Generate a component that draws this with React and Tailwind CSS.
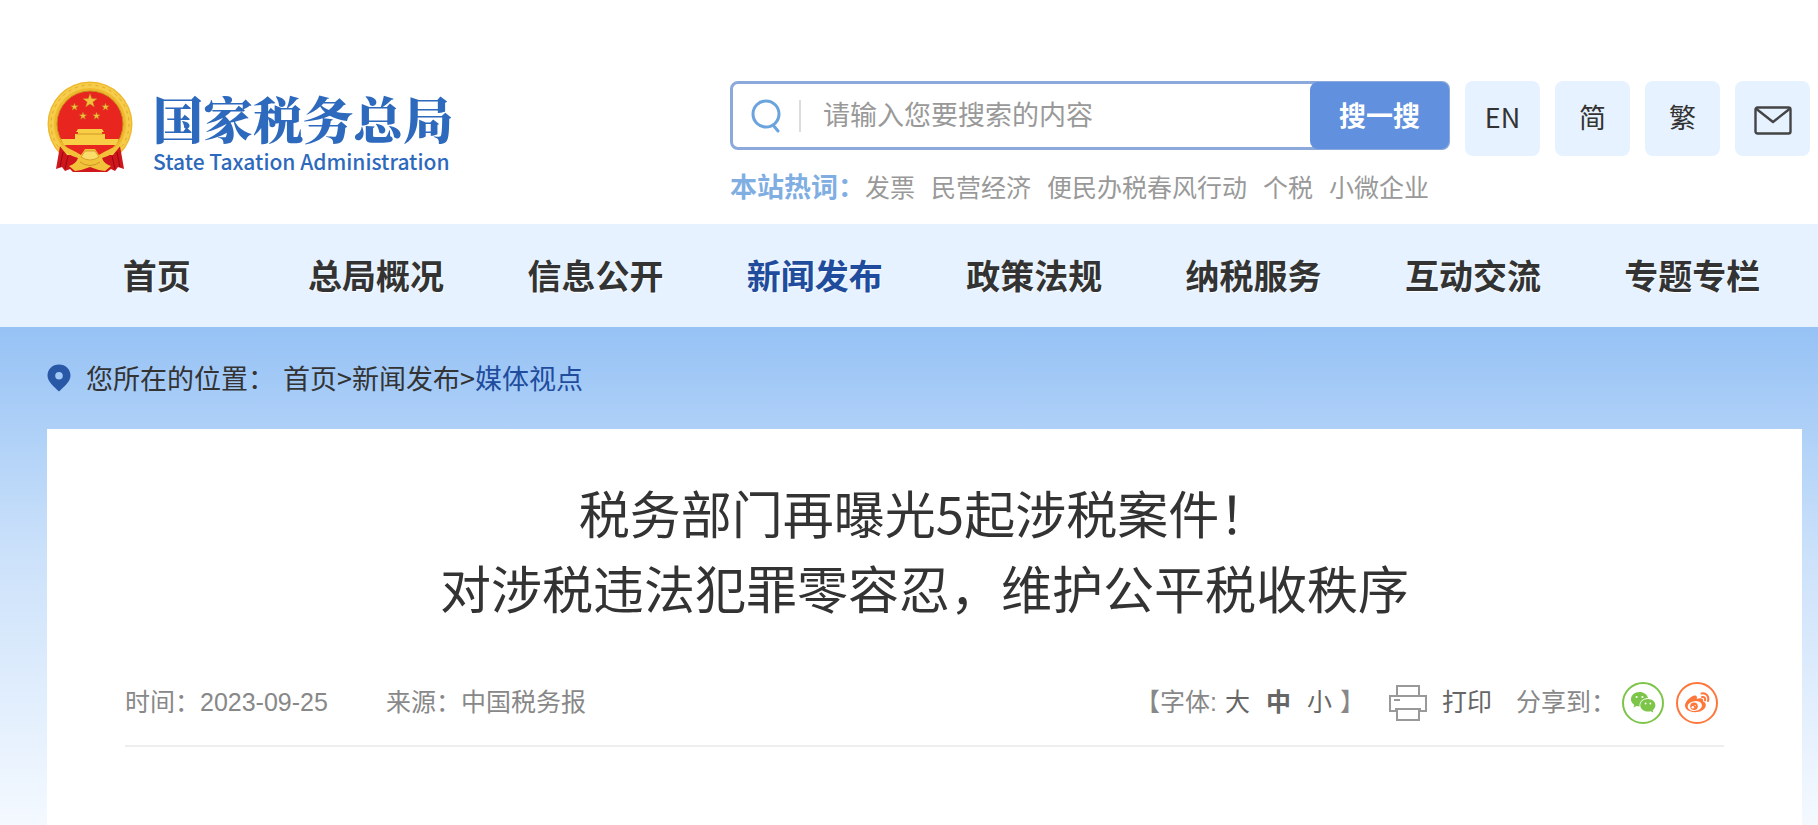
import React from "react";

const NAV = ["首页", "总局概况", "信息公开", "新闻发布", "政策法规", "纳税服务", "互动交流", "专题专栏"];
const HOT = ["发票", "民营经济", "便民办税春风行动", "个税", "小微企业"];

function Star({ cx, cy, r }) {
  const pts = Array.from({ length: 10 }, (_, i) => {
    const a = (Math.PI / 5) * i - Math.PI / 2;
    const d = i % 2 ? r * 0.4 : r;
    return `${cx + d * Math.cos(a)},${cy + d * Math.sin(a)}`;
  }).join(" ");
  return <polygon points={pts} fill="#f3c13c" stroke="#b8761c" strokeWidth="0.4" />;
}

function Emblem() {
  return (
    <svg viewBox="0 0 86 91" className="h-[91px] w-[86px] shrink-0" aria-hidden="true">
      <circle cx="43" cy="43" r="42.5" fill="#efb92f" />
      <circle cx="43" cy="43" r="38.5" fill="none" stroke="#f6cd4b" strokeWidth="5" />
      <circle cx="43" cy="43" r="39" fill="none" stroke="#e3a728" strokeWidth="1" strokeDasharray="3 4" />
      <circle cx="43" cy="43" r="33" fill="#e8251f" stroke="#c98a1e" strokeWidth="1" />
      <Star cx={43} cy={20} r={7.5} />
      <Star cx={27.5} cy={26} r={4} />
      <Star cx={58.5} cy={26} r={4} />
      <Star cx={36} cy={35} r={4} />
      <Star cx={49.5} cy={35} r={4} />
      <path d="M31 48 h24 l2 3 h-2 v2 h3 v5 H72 q-1 3 -3 6 H17 q-2 -3 -3 -6 H28 v-5 h3 v-2 h-2 Z" fill="#f7ce45" />
      <path d="M30 53h26" stroke="#c98a1e" strokeWidth="0.8" />
      <path d="M13 65 L9 88 L15 86 L18 90 L23 88 L26 91 L60 91 L64 88 L68 90 L71 86 L77 88 L73 65 L66 74 H20 Z" fill="#cf161d" />
      <path d="M16 71 l-3 15 M21 75 l-3 13 M70 71 l3 15 M65 75 l3 13" stroke="#97080f" strokeWidth="1" />
      <path d="M12 64 q11 3 22 10 l4 -6 h10 l4 6 q11 -7 22 -10 q-7 10 -19 13 q2 6 9 8 l-6 5 q-8 -1 -15 -4 q-7 3 -15 4 l-6 -5 q7 -2 9 -8 q-12 -3 -19 -13 Z" fill="#f2c23a" />
      <path d="M34 76 q9 6 18 0 l-4 -6 h-10 Z" fill="#f9dc6a" stroke="#cf9526" strokeWidth="0.8" />
      <path d="M33 81 q10 7 20 0" fill="none" stroke="#cf9526" strokeWidth="1" />
    </svg>
  );
}

function SearchIcon() {
  return (
    <svg viewBox="0 0 30 34" className="h-[34px] w-[30px] shrink-0" fill="none" stroke="#6aa3de" strokeWidth="3" strokeLinecap="round" aria-hidden="true">
      <circle cx="15" cy="15" r="13" />
      <path d="M22 26 L27 32" />
    </svg>
  );
}

function MailIcon() {
  return (
    <svg viewBox="0 0 38 29" className="mt-1 h-[29px] w-[38px]" fill="none" stroke="#444" strokeWidth="2.4" strokeLinejoin="round" aria-hidden="true">
      <rect x="1.5" y="1.5" width="35" height="26" rx="2" />
      <path d="M2.5 3 L19 16 L35.5 3" />
    </svg>
  );
}

function PinIcon() {
  return (
    <svg viewBox="0 0 24 28" className="h-7 w-6 shrink-0" aria-hidden="true">
      <path fillRule="evenodd" fill="#2858a6" d="M12 .5 C5.400 .5 .5 5.400 .5 11.500 C.5 18 7 22.500 12 27.500 C17 22.500 23.500 18 23.500 11.500 C23.500 5.400 18.600 .5 12 .5 Z M12 8 a3.800 3.800 0 1 1 0 7.600 a3.800 3.800 0 1 1 0 -7.600 Z" />
    </svg>
  );
}

function PrinterIcon() {
  return (
    <svg viewBox="0 0 38 36" className="h-9 w-[38px] shrink-0" fill="none" stroke="#999" strokeWidth="2" aria-hidden="true">
      <path d="M8 10 V1 H30 V10" />
      <path d="M8 26 H1 V11 H37 V26 H30" />
      <path d="M6 24 H32 M8 24 V35 H30 V24" />
      <path d="M5 15 H11" />
    </svg>
  );
}

function WechatIcon() {
  return (
    <svg viewBox="0 0 42 42" className="h-[42px] w-[42px]" aria-hidden="true">
      <circle cx="21" cy="21" r="20" fill="#fff" stroke="#7cc549" strokeWidth="2" />
      <path fill="#7cc549" d="M17.500 10 C12.500 10 9 13.200 9 17.300 C9 19.700 10.300 21.700 12.300 23 L11.500 25.600 L14.500 24.100 C15.500 24.400 16.500 24.600 17.500 24.600 C17 19.500 21 16 26 16 C25.200 12.400 21.800 10 17.500 10 Z" />
      <path fill="#7cc549" d="M26 17 C21.600 17 18.300 19.800 18.300 23.300 C18.300 26.800 21.600 29.600 26 29.600 C27 29.600 27.800 29.500 28.600 29.200 L31.300 30.600 L30.600 28.200 C32.300 27 33.400 25.300 33.400 23.300 C33.400 19.800 30.200 17 26 17 Z" />
      <g fill="#fff">
        <circle cx="14.600" cy="15" r="1.100" />
        <circle cx="20.400" cy="15" r="1.100" />
        <circle cx="23.600" cy="21.500" r="0.900" />
        <circle cx="28.400" cy="21.500" r="0.900" />
      </g>
    </svg>
  );
}

function WeiboIcon() {
  return (
    <svg viewBox="0 0 42 42" className="h-[42px] w-[42px]" aria-hidden="true">
      <circle cx="21" cy="21" r="20" fill="#fff" stroke="#ff763b" strokeWidth="2" />
      <path fill="#ff763b" d="M18.500 13.500 C20.500 13 21.500 14.500 20.800 17 C24.500 15.500 28 16.300 27 19.600 C29 20.200 30 21.500 29.800 23.500 C29.300 27.500 24.500 30.200 19 30.200 C13 30.200 9 27.500 9 23.600 C9 19.800 14 14.500 18.500 13.500 Z" />
      <ellipse cx="18.800" cy="24" rx="7.200" ry="4.900" fill="#fff" transform="rotate(-8 18.800 24)" />
      <circle cx="18" cy="24.200" r="3.800" fill="#ff763b" />
      <circle cx="16.800" cy="25.200" r="1.300" fill="#fff" />
      <circle cx="19.200" cy="23.600" r="0.600" fill="#fff" />
      <path d="M25.500 11.500 C30 10.500 33.500 14.500 32 19 M26 15 C28.300 14.500 29.700 16.300 29 18.400" fill="none" stroke="#ff763b" strokeWidth="2" strokeLinecap="round" />
    </svg>
  );
}

export default function App() {
  return (
    <div className="flex min-h-screen flex-col bg-white font-['Noto_Sans_CJK_SC',sans-serif] text-[#333]">
      <header className="flex h-56 items-start justify-between pr-2 pl-[47px] pt-[81px]">
        <a href="#" className="flex items-start gap-5 text-[#2d69bc]">
          <Emblem />
          <span className="flex flex-col pt-1.5">
            <span className="font-['Noto_Serif_CJK_SC','Noto_Sans_CJK_SC',serif] text-[50px] leading-[60px] font-black">国家税务总局</span>
            <span className="text-[21px] leading-7 font-medium">State Taxation Administration</span>
          </span>
        </a>

        <div className="flex gap-[15px]">
          <div className="w-[720px]">
            <form className="flex h-[69px] rounded-lg border-3 border-[#8baadb] bg-white" onSubmit={(e) => e.preventDefault()}>
              <label htmlFor="q" className="flex items-center gap-[18px] pl-[18px]">
                <SearchIcon />
                <span className="h-8 w-0.5 bg-[#ddd]" />
              </label>
              <input id="q" type="text" aria-label="搜索" placeholder="请输入您要搜索的内容" className="min-w-0 flex-1 px-[22px] pb-0.5 text-[27px] outline-none placeholder:text-[#999]" />
              <button type="submit" className="-my-0.5 -mr-0.5 w-[139px] rounded-lg bg-[#6090de] text-[27px] font-bold text-white">搜一搜</button>
            </form>
            <div className="mt-[18px] flex items-center gap-4 text-[25px] leading-9 whitespace-nowrap text-[#999]">
              <span className="-mr-4 text-[27px] font-bold text-[#80aee3]">本站热词：</span>
              {HOT.map((h) => (
                <a key={h} href="#">{h}</a>
              ))}
            </div>
          </div>
          {["EN", "简", "繁"].map((t) => (
            <a key={t} href="#" className="flex size-[75px] items-center justify-center rounded-lg bg-[#e6f2ff] pb-0.5 text-[27px]">{t}</a>
          ))}
          <a href="#" aria-label="邮箱" className="flex size-[75px] items-center justify-center rounded-lg bg-[#e6f2ff]">
            <MailIcon />
          </a>
        </div>
      </header>

      <nav className="grid h-[103px] grid-cols-8 items-center bg-[#e6f2ff] pr-4 pb-0.5 pl-[47px] text-center text-[34px] font-bold text-shadow-[1px_1px_1px_#fff]">
        {NAV.map((n) => (
          <a key={n} href="#" className={n === "新闻发布" ? "text-[#1f4c9c]" : "text-[#333]"}>{n}</a>
        ))}
      </nav>

      <main className="flex flex-1 flex-col bg-linear-to-b from-[#96c2f5] via-[#cbe1fa] via-45% to-[#f4f9ff] pr-4 pl-[47px]">
        <div className="flex h-[102px] items-center text-[27px]">
          <PinIcon />
          <span className="ml-[15px]">您所在的位置：</span>
          <span className="ml-2">
            <a href="#">首页</a>&gt;<a href="#">新闻发布</a>&gt;<a href="#" className="text-[#1f4c9c]">媒体视点</a>
          </span>
        </div>

        <article className="flex-1 bg-white px-[78px] pt-[46px]">
          <h1 className="text-center text-[51px] leading-[75px] font-normal">
            税务部门再曝光5起涉税案件！
            <br />
            对涉税违法犯罪零容忍，维护公平税收秩序
          </h1>
          <div className="mt-14 flex h-[44px] items-center justify-between font-['Liberation_Sans','Noto_Sans_CJK_SC',sans-serif] text-[25px] text-[#888]">
            <div className="flex gap-[58px]">
              <span>时间：2023-09-25</span>
              <span>来源：中国税务报</span>
            </div>
            <div className="flex items-center">
              <span>【字体:</span>
              <button type="button" className="ml-2 text-[#666]">大</button>
              <button type="button" className="ml-4 font-bold text-[#666]">中</button>
              <button type="button" className="ml-4 text-[#666]">小</button>
              <span className="mr-6 ml-2">】</span>
              <PrinterIcon />
              <button type="button" className="ml-[15px] text-[#666]">打印</button>
              <span className="ml-6">分享到：</span>
              <a href="#" aria-label="微信" className="ml-1.5"><WechatIcon /></a>
              <a href="#" aria-label="微博" className="mr-1.5 ml-3"><WeiboIcon /></a>
            </div>
          </div>
          <hr className="mt-5 border-t-2 border-[#eee]" />
        </article>
      </main>
    </div>
  );
}
